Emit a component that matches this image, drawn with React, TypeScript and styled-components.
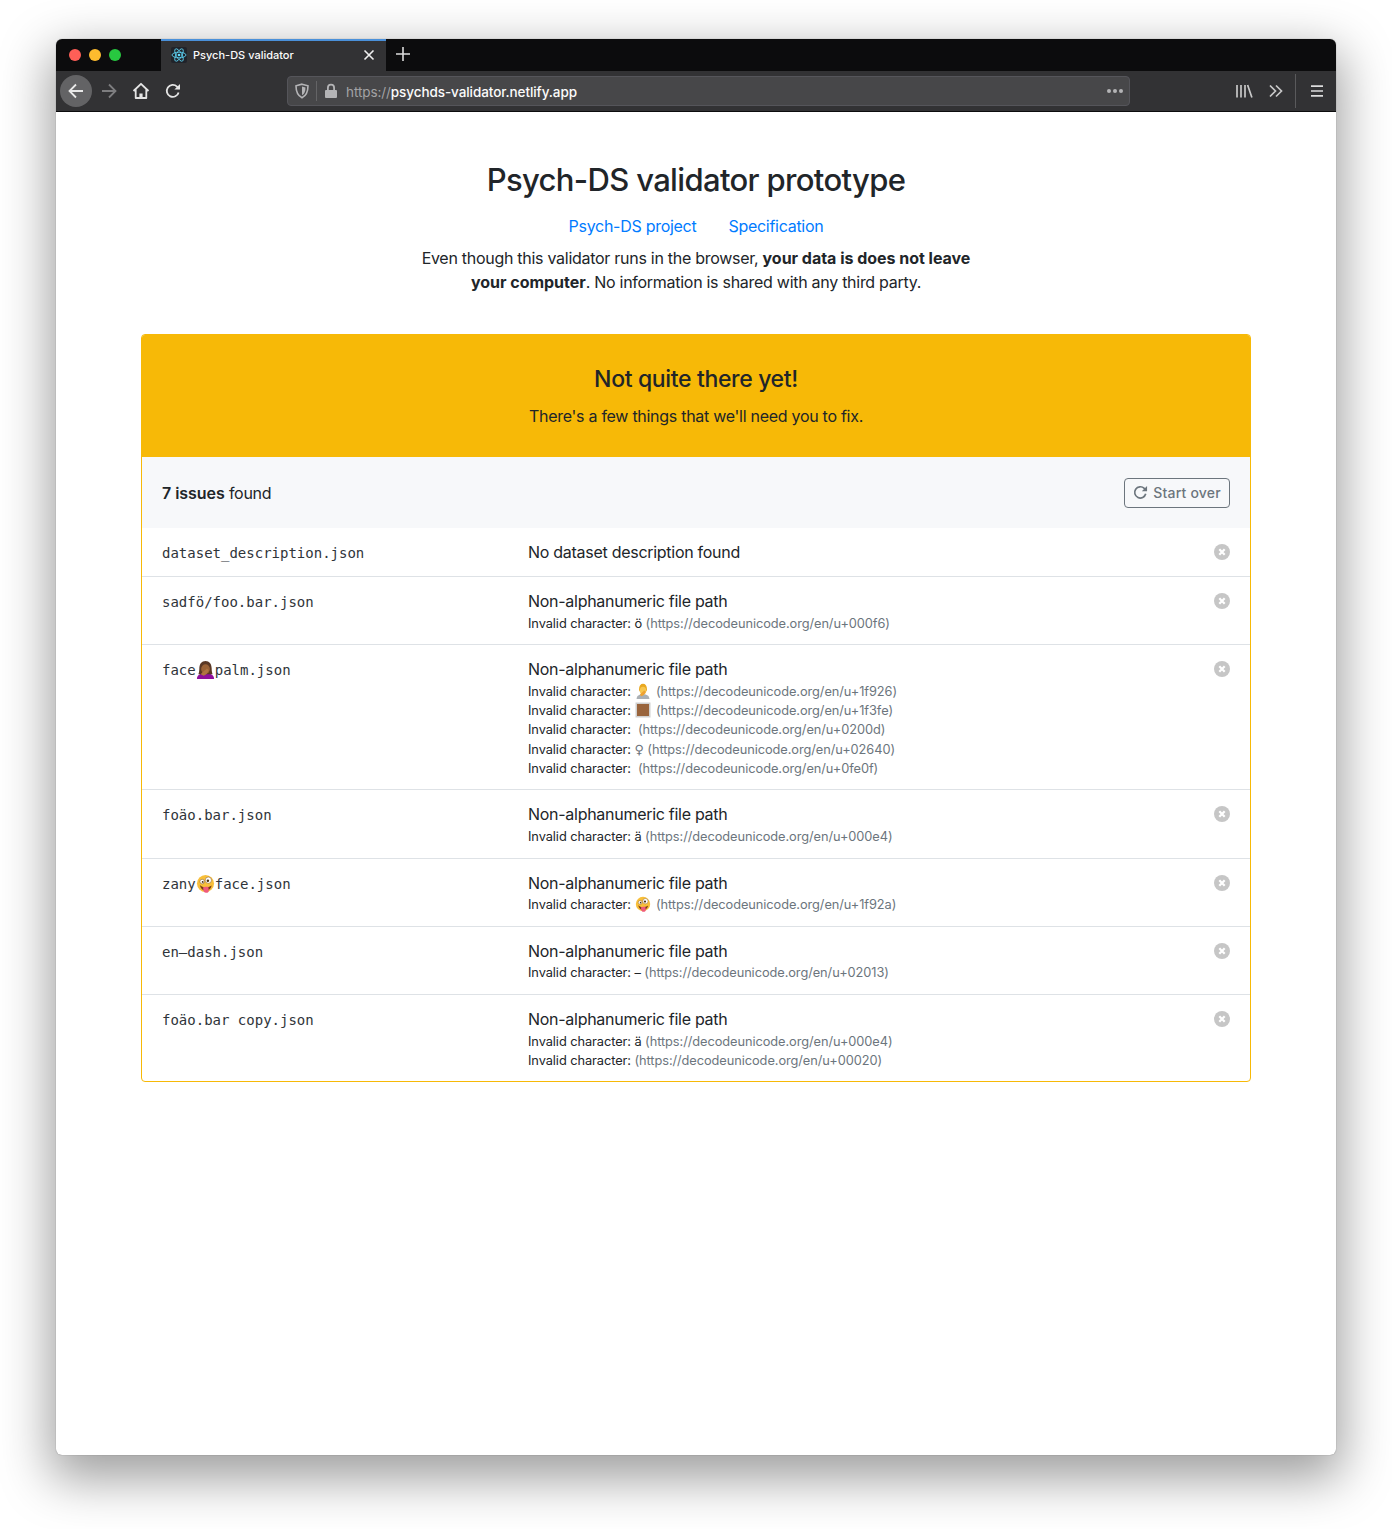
import React from "react";
import styled, { createGlobalStyle } from "styled-components";

// page + fake firefox window
const GlobalStyle = createGlobalStyle`
  html, body { margin: 0; padding: 0; background: #fff; }
  body {
    font-family: Inter, "Noto Sans", "Liberation Sans", sans-serif;
    font-size: 16px;
    line-height: 24px;
    letter-spacing: -0.28px;
    color: #212529;
  }
  * { box-sizing: border-box; }
`;

const Stage = styled.div`
  padding: 39px 56px 74px;
`;

const BrowserWindow = styled.div`
  width: 1280px;
  height: 1416px;
  border-radius: 6px;
  overflow: hidden;
  background: #fff;
  box-shadow: 0 18px 50px 6px rgba(0, 0, 0, 0.38), 0 0 1px rgba(0, 0, 0, 0.5);
`;

const TabBar = styled.div`
  height: 32px;
  background: #0c0c0d;
  display: flex;
  align-items: stretch;
`;

const Lights = styled.div`
  width: 105px;
  padding-left: 13px;
  display: flex;
  align-items: center;
  gap: 8px;
`;

const Light = styled.span<{ $color: string }>`
  width: 12px;
  height: 12px;
  border-radius: 50%;
  background: ${(p) => p.$color};
`;

const Tab = styled.div`
  width: 225px;
  background: #323234;
  border-top: 2px solid #4a90d9;
  display: flex;
  align-items: center;
  padding: 0 11px 2px 10px;
  color: #fbfbfb;
  font-size: 11px;
  font-weight: 500;
  letter-spacing: 0;
`;

const TabTitle = styled.span`
  flex: 1;
  margin-left: 6px;
`;

const PlusSlot = styled.div`
  width: 34px;
  padding-bottom: 2px;
  display: flex;
  align-items: center;
  justify-content: center;
`;

const Toolbar = styled.div`
  height: 41px;
  background: #323234;
  border-bottom: 1px solid #0c0c0d;
  display: flex;
  align-items: center;
  padding-left: 4px;
`;

const Slot = styled.div<{ $round?: boolean }>`
  width: 32px;
  height: 32px;
  border-radius: 50%;
  flex: none;
  display: flex;
  align-items: center;
  justify-content: center;
  margin-right: ${(p) => (p.$round ? "1px" : "0")};
  background: ${(p) => (p.$round ? "#636365" : "transparent")};
`;

const UrlBar = styled.div`
  width: 843px;
  height: 30px;
  margin: 0 98px;
  flex: none;
  background: #474749;
  border: 1px solid #55555a;
  border-radius: 4px;
  display: flex;
  align-items: center;
  padding: 0 5px 0 6px;
  font-size: 13.5px;
  letter-spacing: -0.08px;
  color: #a3a3a5;
`;

const UrlDivider = styled.span`
  width: 1px;
  height: 20px;
  background: #646466;
  margin: 0 7px 0 6px;
`;

const UrlText = styled.span`
  flex: 1;
  margin-left: 8px;
  padding-top: 1px;
  b {
    color: #fbfbfb;
    font-weight: 500;
  }
`;

const ToolbarDivider = styled.span`
  width: 1px;
  height: 34px;
  background: #5a5a5c;
  margin: 0 5px 0 3px;
  flex: none;
`;

// page content
const Main = styled.main`
  width: 1110px;
  margin: 0 auto;
  padding-top: 49px;
`;

const Title = styled.h1`
  margin: 0 0 15px;
  font-size: 31px;
  line-height: 38.4px;
  font-weight: 500;
  letter-spacing: -0.65px;
  text-align: center;
`;

const Links = styled.nav`
  display: flex;
  justify-content: center;
  gap: 32px;
`;

const PageLink = styled.a`
  color: #007bff;
  text-decoration: none;
`;

const Intro = styled.p`
  width: 570px;
  margin: 8px auto 40px;
  text-align: center;
  b {
    font-weight: 700;
    letter-spacing: -0.02px;
  }
`;

const Card = styled.section`
  border: 1px solid #f7b907;
  border-radius: 4px;
  overflow: hidden;
`;

const Banner = styled.header`
  background: #f7b907;
  padding: 30px 20px 28px;
  text-align: center;
  h2 {
    margin: 0 0 10px;
    font-size: 23px;
    line-height: 28.8px;
    font-weight: 500;
    letter-spacing: -0.35px;
  }
  p {
    margin: 0;
  }
`;

const SummaryBar = styled.div`
  height: 72px;
  background: #f7f8fa;
  border-top: 1px solid #f7b907;
  padding: 0 20px;
  display: flex;
  align-items: center;
  justify-content: space-between;
  b {
    font-weight: 600;
    letter-spacing: -0.05px;
  }
`;

const StartOver = styled.button`
  height: 30px;
  width: 106px;
  padding: 0;
  border: 1px solid #6c757d;
  border-radius: 4px;
  background: transparent;
  color: #6c757d;
  font-family: inherit;
  font-size: 14px;
  font-weight: 500;
  letter-spacing: 0.2px;
  display: flex;
  align-items: center;
  justify-content: center;
  gap: 5px;
`;

const Row = styled.div`
  display: grid;
  grid-template-columns: 366px 1fr 16px;
  padding: 12px 20px 11.36px;
  border-bottom: 1px solid #dee2e6;
  &:last-child {
    border-bottom: 0;
  }
`;

const FileName = styled.code`
  padding-top: 1px;
  margin-bottom: -1px;
  font-family: "DejaVu Sans Mono", "Liberation Mono", monospace;
  font-size: 14px;
  line-height: 24px;
  letter-spacing: 0;
  color: #2f343a;
  white-space: pre;
  svg {
    vertical-align: -4px;
  }
`;

const IssueTitle = styled.div`
  margin-bottom: 0.65px;
`;

const CharLine = styled.small`
  display: block;
  height: 19.2px;
  font-size: 12.8px;
  line-height: 19.2px;
  letter-spacing: -0.07px;
  white-space: pre;
  svg {
    vertical-align: -3px;
    margin: 0 1px;
  }
`;

const CharLink = styled.span`
  color: #6c757d;
`;

const FemaleSign = styled.span`
  font-family: "DejaVu Sans", sans-serif;
  font-size: 12.8px;
  letter-spacing: 0;
  color: #6c757d;
`;

const CloseSlot = styled.div`
  height: 24px;
  display: flex;
  align-items: center;
`;

// drawings
const Back = () => (
  <svg width="18" height="18" viewBox="0 0 18 18" fill="none" stroke="#e8e8e8" strokeWidth="1.8">
    <path d="M16 9H2.5M9 2.5 2.5 9 9 15.5" />
  </svg>
);
const Forward = () => (
  <svg width="18" height="18" viewBox="0 0 18 18" fill="none" stroke="#7d7d7f" strokeWidth="1.8">
    <path d="M2 9h13.5M9 2.5 15.5 9 9 15.5" />
  </svg>
);
const Home = () => (
  <svg width="18" height="18" viewBox="0 0 18 18" fill="none" stroke="#e4e4e4" strokeWidth="1.8" strokeLinejoin="round">
    <path d="M1.5 9 9 1.8 16.5 9M3.7 7.5V16h10.6V7.5" />
    <path d="M7.4 16v-4.6h3.2V16" fill="#e4e4e4" stroke="none" />
  </svg>
);
const Reload = ({ color = "#e4e4e4", size = 16 }: { color?: string; size?: number }) => (
  <svg width={size} height={size} viewBox="0 0 16 16" fill="none" stroke={color} strokeWidth="1.8">
    <path d="M13.6 9.4A6 6 0 1 1 12 3.6L14 5.6" />
    <path d="M15 1v5.6H9.4z" fill={color} stroke="none" />
  </svg>
);
const Shield = () => (
  <svg width="16" height="16" viewBox="0 0 16 16" fill="none" stroke="#b4b4b6" strokeWidth="1.6">
    <path d="M8 1.2 14 2.8C14 9 12.5 12.6 8 14.8 3.5 12.6 2 9 2 2.8z" />
    <path d="M8 3.5 11.5 4.5C11.5 8.5 10.5 10.8 8 12.2z" fill="#b4b4b6" stroke="none" />
  </svg>
);
const Lock = () => (
  <svg width="14" height="16" viewBox="0 0 14 16" fill="#b4b4b6">
    <path d="M3 7V4.8a4 4 0 0 1 8 0V7h1a1 1 0 0 1 1 1v6a1 1 0 0 1-1 1H2a1 1 0 0 1-1-1V8a1 1 0 0 1 1-1zm1.8 0h4.4V4.8a2.2 2.2 0 0 0-4.4 0z" />
  </svg>
);
const Dots = () => (
  <svg width="18" height="6" viewBox="0 0 18 6" fill="#b4b4b6">
    <circle cx="3" cy="3" r="2" />
    <circle cx="9" cy="3" r="2" />
    <circle cx="15" cy="3" r="2" />
  </svg>
);
const Library = () => (
  <svg width="18" height="16" viewBox="0 0 18 16" fill="none" stroke="#c8c8c8" strokeWidth="1.7">
    <path d="M2 2v12.5M6 2v12.5M10 2v12.5M12.6 2l4.3 12.5" />
  </svg>
);
const Chevrons = () => (
  <svg width="16" height="14" viewBox="0 0 16 14" fill="none" stroke="#c8c8c8" strokeWidth="1.7">
    <path d="M2 1.5 7.5 7 2 12.5M8 1.5 13.5 7 8 12.5" />
  </svg>
);
const Burger = () => (
  <svg width="14" height="12" viewBox="0 0 14 12" fill="none" stroke="#dcdcdc" strokeWidth="1.7">
    <path d="M1 1.2h12M1 6h12M1 10.8h12" />
  </svg>
);
const TabClose = () => (
  <svg width="12" height="12" viewBox="0 0 12 12" fill="none" stroke="#f0f0f0" strokeWidth="1.6">
    <path d="M1.5 1.5l9 9M10.5 1.5l-9 9" />
  </svg>
);
const Plus = () => (
  <svg width="14" height="14" viewBox="0 0 14 14" fill="none" stroke="#dcdcdc" strokeWidth="1.6">
    <path d="M7 0v14M0 7h14" />
  </svg>
);
const ReactFavicon = () => (
  <svg width="16" height="16" viewBox="0 0 16 16" fill="none" stroke="#61dafb" strokeWidth="0.8">
    <rect width="16" height="16" rx="2" fill="#20232a" stroke="none" />
    <ellipse cx="8" cy="8" rx="7" ry="2.8" />
    <ellipse cx="8" cy="8" rx="7" ry="2.8" transform="rotate(60 8 8)" />
    <ellipse cx="8" cy="8" rx="7" ry="2.8" transform="rotate(120 8 8)" />
    <circle cx="8" cy="8" r="1.3" fill="#61dafb" stroke="none" />
  </svg>
);
const CloseCircle = () => (
  <svg width="16" height="16" viewBox="0 0 16 16">
    <circle cx="8" cy="8" r="8" fill="#c6c6c6" />
    <path d="M5.3 5.3l5.4 5.4M10.7 5.3l-5.4 5.4" stroke="#fff" strokeWidth="2.2" />
  </svg>
);

const Facepalm = ({ size }: { size: number }) => (
  <svg width={size} height={size} viewBox="0 0 20 20">
    <path d="M1 20c0-4 3-6 9-6s9 2 9 6z" fill="#8e0f9c" />
    <path d="M3.5 9c0-5 2.5-8 6.5-8s6.5 3 6.5 8c0 3 .5 5 1 6H2.5c.5-1 1-3 1-6z" fill="#5a3825" />
    <ellipse cx="10" cy="9.5" rx="4.6" ry="5" fill="#9a6236" />
    <path d="M5 15c2-3 5-4 6.5-6l2 1.5c-1 3-3 5.5-5.5 6z" fill="#b07442" />
  </svg>
);
const BlondePalm = ({ size }: { size: number }) => (
  <svg width={size} height={size} viewBox="0 0 20 20">
    <path d="M2 20c0-4 3-6 8-6s8 2 8 6z" fill="#aab0b5" />
    <path d="M5 8c0-4.5 2-7 5-7s5 2.5 5 7c0 1-.5 2-1 2.5H6C5.5 10 5 9 5 8z" fill="#e9a820" />
    <ellipse cx="10" cy="9.5" rx="4" ry="4.8" fill="#f7c64f" />
    <path d="M6 15c1.5-2.5 4-3.5 5.5-5.5l2 1.5c-1 2.8-3 5-5 5.5z" fill="#eea232" />
  </svg>
);
const SkinTone = ({ size }: { size: number }) => (
  <svg width={size} height={size} viewBox="0 0 16 16">
    <rect x="0.5" y="0.5" width="15" height="15" fill="#cfcfcf" />
    <rect x="2" y="2" width="12" height="12" fill="#99643c" />
  </svg>
);
const Zany = ({ size }: { size: number }) => (
  <svg width={size} height={size} viewBox="0 0 20 20">
    <circle cx="10" cy="10" r="9" fill="#f8bf3a" />
    <circle cx="6.5" cy="8" r="2.4" fill="#fff" stroke="#7a4a12" strokeWidth="0.5" />
    <circle cx="13" cy="6.5" r="3.3" fill="#fff" stroke="#7a4a12" strokeWidth="0.5" />
    <circle cx="7" cy="8.3" r="1" fill="#4a2d0c" />
    <circle cx="12.5" cy="7" r="1.3" fill="#4a2d0c" />
    <path d="M4 11.5c3 3 8 3.5 12.5.5-1 4-3.5 5.5-6.5 5.5S5 15.5 4 11.5z" fill="#7a3a14" />
    <path d="M7.5 14c2-.5 4-.5 5.5-.5l.5 4c-.3 1.7-1.5 2.5-3 2.3-1.7-.2-2.6-1.4-2.8-3z" fill="#ef5b7c" />
  </svg>
);

type Char = { label: React.ReactNode; code: string };
type Issue = { file: React.ReactNode; title: string; chars: Char[] };

const issues: Issue[] = [
  { file: "dataset_description.json", title: "No dataset description found", chars: [] },
  {
    file: "sadfö/foo.bar.json",
    title: "Non-alphanumeric file path",
    chars: [{ label: "ö", code: "000f6" }],
  },
  {
    file: (
      <>
        face
        <Facepalm size={19} />
        palm.json
      </>
    ),
    title: "Non-alphanumeric file path",
    chars: [
      { label: <BlondePalm size={16} />, code: "1f926" },
      { label: <SkinTone size={16} />, code: "1f3fe" },
      { label: "\u200d", code: "0200d" },
      { label: <FemaleSign>♀</FemaleSign>, code: "02640" },
      { label: "\ufe0f", code: "0fe0f" },
    ],
  },
  {
    file: "foäo.bar.json",
    title: "Non-alphanumeric file path",
    chars: [{ label: "ä", code: "000e4" }],
  },
  {
    file: (
      <>
        zany
        <Zany size={19} />
        face.json
      </>
    ),
    title: "Non-alphanumeric file path",
    chars: [{ label: <Zany size={16} />, code: "1f92a" }],
  },
  {
    file: "en–dash.json",
    title: "Non-alphanumeric file path",
    chars: [{ label: "–", code: "02013" }],
  },
  {
    file: "foäo.bar copy.json",
    title: "Non-alphanumeric file path",
    chars: [
      { label: "ä", code: "000e4" },
      { label: "", code: "00020" },
    ],
  },
];

export default function App() {
  return (
    <Stage>
      <GlobalStyle />
      <BrowserWindow>
        <TabBar>
          <Lights>
            <Light $color="#ff5f57" />
            <Light $color="#febc2e" />
            <Light $color="#28c840" />
          </Lights>
          <Tab>
            <ReactFavicon />
            <TabTitle>Psych-DS validator</TabTitle>
            <TabClose />
          </Tab>
          <PlusSlot>
            <Plus />
          </PlusSlot>
        </TabBar>
        <Toolbar>
          <Slot $round>
            <Back />
          </Slot>
          <Slot>
            <Forward />
          </Slot>
          <Slot>
            <Home />
          </Slot>
          <Slot>
            <Reload />
          </Slot>
          <UrlBar>
            <Shield />
            <UrlDivider />
            <Lock />
            <UrlText>
              https://<b>psychds-validator.netlify.app</b>
            </UrlText>
            <Dots />
          </UrlBar>
          <Slot>
            <Library />
          </Slot>
          <Slot>
            <Chevrons />
          </Slot>
          <ToolbarDivider />
          <Slot>
            <Burger />
          </Slot>
        </Toolbar>

        <Main>
          <Title>Psych-DS validator prototype</Title>
          <Links>
            <PageLink href="#">Psych-DS project</PageLink>
            <PageLink href="#">Specification</PageLink>
          </Links>
          <Intro>
            Even though this validator runs in the browser, <b>your data is does not leave your computer</b>. No
            information is shared with any third party.
          </Intro>
          <Card>
            <Banner>
              <h2>Not quite there yet!</h2>
              <p>There's a few things that we'll need you to fix.</p>
            </Banner>
            <SummaryBar>
              <div>
                <b>7 issues</b> found
              </div>
              <StartOver>
                <Reload color="#6c757d" size={15} />
                Start over
              </StartOver>
            </SummaryBar>
            {issues.map((issue, i) => (
              <Row key={i}>
                <FileName>{issue.file}</FileName>
                <div>
                  <IssueTitle>{issue.title}</IssueTitle>
                  {issue.chars.map((c) => (
                    <CharLine key={c.code}>
                      Invalid character: {c.label}
                      {c.label === "" ? "" : " "}
                      <CharLink>(https://decodeunicode.org/en/u+{c.code})</CharLink>
                    </CharLine>
                  ))}
                </div>
                <CloseSlot>
                  <CloseCircle />
                </CloseSlot>
              </Row>
            ))}
          </Card>
        </Main>
      </BrowserWindow>
    </Stage>
  );
}
